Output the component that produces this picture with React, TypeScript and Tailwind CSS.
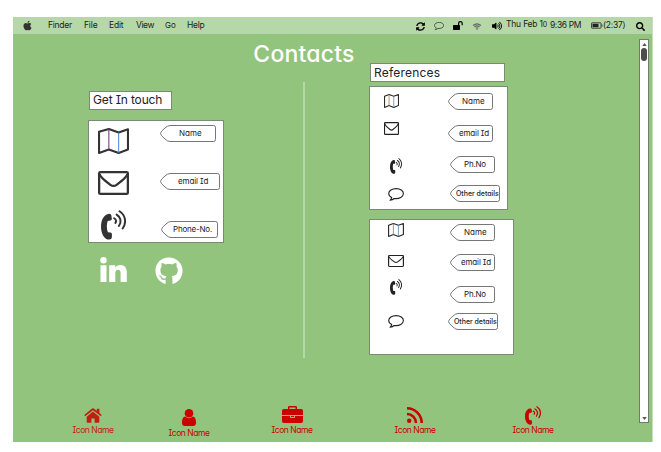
import type { ReactNode } from "react";
import { FaApple, FaGithub, FaSearch, FaSyncAlt, FaVolumeUp } from "react-icons/fa";

type IconProps = { className?: string };

function MapIcon({ className = "" }: IconProps) {
  return (
    <svg viewBox="0 0 30 26" preserveAspectRatio="none" className={className} fill="none" stroke="currentColor">
      <path d="M1 3.800 10.500 1 20 4.500 29 1.200v20.300L20 25l-9.500-3.500L1 25Z" strokeWidth="2" strokeLinejoin="round" />
      <path d="M10.500 1v20.500" strokeWidth="1" stroke="#74347a" />
      <path d="M20 4.500v20.500" strokeWidth="1" stroke="#4f8bd0" />
    </svg>
  );
}

function SmallMapIcon({ className = "" }: IconProps) {
  return (
    <svg viewBox="0 0 16 14" preserveAspectRatio="none" className={className} fill="none" stroke="currentColor">
      <path d="M.6 2.300 5.400.6l5 1.700L15.400.6v11L10.400 13.400l-5-1.800L.6 13.400Z" strokeWidth="1.100" strokeLinejoin="round" />
      <path d="M5.400.6v11" strokeWidth=".9" stroke="#a98565" />
      <path d="M10.400 2.300v11" strokeWidth=".9" stroke="#6d8fb4" />
    </svg>
  );
}

function MailIcon({ className = "" }: IconProps) {
  return (
    <svg viewBox="0 0 30 24" preserveAspectRatio="none" className={className} fill="none" stroke="currentColor" strokeWidth="2.200" strokeLinejoin="round">
      <rect x="1.100" y="1.100" width="27.800" height="21.800" rx="1.200" />
      <path d="M1.500 3C2 6 5 8.500 12 13.800q3 2.200 6 0C25 8.500 28 6 28.500 3" />
    </svg>
  );
}

function CommentIcon({ className = "" }: IconProps) {
  return (
    <svg viewBox="0 0 16 13" preserveAspectRatio="none" className={className} fill="none" stroke="currentColor" strokeWidth="1.100" strokeLinejoin="round">
      <path d="M8.200.6C4 .6.700 2.800.700 5.600c0 1.700 1.200 3.100 3 4-.2 1-.8 1.900-1.700 2.700 1.800-.2 3.200-.8 4.200-1.800 5.300.7 9.200-1.800 9.200-4.900C15.400 2.800 12.200.600 8.200.600Z" />
    </svg>
  );
}

/* Upright handset with three sound waves. */
function PhoneIcon({ className = "" }: IconProps) {
  return (
    <svg viewBox="0 0 24 30" preserveAspectRatio="none" className={className}>
      <path
        fill="currentColor"
        d="M7 3.900Q9.600 3.300 9.900 5.300L10.400 8.700Q10.500 10.300 9 10.600L6.400 11C5.300 14.500 5.300 18.500 6.600 22.300L9 22.400Q10.500 22.600 10.500 24.200L10.400 27.600Q10.300 29.500 8 29.600C3.500 29.800 0 24 0 16.700 0 9.800 2.600 4.800 7 3.900Z"
      />
      <g fill="none" stroke="currentColor" strokeWidth="1.900" strokeLinecap="round">
        <path d="M12.600 8.300q3 1.800 1.200 4.700" />
        <path d="M15 4.600c4 2.400 5 7 2.200 11.400" />
        <path d="M17.800 1.200c5.700 3.800 7 11.200 3 17.300" />
      </g>
    </svg>
  );
}

function LinkedinIcon({ className = "" }: IconProps) {
  return (
    <svg viewBox="0 0 27 26" className={className} fill="currentColor">
      <circle cx="3.500" cy="3.200" r="3.200" />
      <path d="M.5 8.300h6V25h-6ZM9.200 8.300h6v2.300c1-1.700 2.700-2.700 5.100-2.700 4.100 0 6.500 2.700 6.500 7.400V25h-6.200v-8.900c0-2.300-.8-3.400-2.400-3.400-1.800 0-2.900 1.200-2.900 3.500V25H9.200Z" />
    </svg>
  );
}

function HomeIcon({ className = "" }: IconProps) {
  return (
    <svg viewBox="0 0 18 15" className={className} fill="currentColor">
      <path d="M9 3.600 15.300 8.800v5.300q0 .7-.7.7h-4V10.400H7.400v4.400h-4q-.7 0-.7-.7V8.800Z" />
      <path d="M9 .200q.5 0 .9.300L12.800 3V1.100q0-.4.400-.4h1.800q.4 0 .4.400v4l2.300 2-.9 1.100L9 2.200 1.200 8.200l-.9-1.100L8.100.500Q8.500.200 9 .200Z" />
    </svg>
  );
}

function UserIcon({ className = "" }: IconProps) {
  return (
    <svg viewBox="0 0 14 17" className={className} fill="currentColor">
      <circle cx="7" cy="4.300" r="4.300" />
      <path d="M3.200 7.600C1 7.800 0 10.200 0 13.700 0 15.800 1.200 17 3 17h8c1.800 0 3-1.200 3-3.300 0-3.500-1-5.900-3.200-6.100A5.600 5.600 0 0 1 7 9.200a5.600 5.600 0 0 1-3.800-1.600Z" />
    </svg>
  );
}

function BriefcaseIcon({ className = "" }: IconProps) {
  return (
    <svg viewBox="0 0 21 17" className={className} fill="currentColor" fillRule="evenodd">
      <path d="M6 3V1.200Q6 0 7.200 0h6.600Q15 0 15 1.200V3h4.200Q21 3 21 4.800V9H0V4.800Q0 3 1.800 3ZM7.500 3h6V1.500h-6Z" />
      <path d="M0 10h8v1.300q0 .7.700.7h3.600q.7 0 .7-.7V10h8v5.200q0 1.800-1.800 1.800H1.800Q0 17 0 15.200Zm9 0h3v1H9Z" />
    </svg>
  );
}

function RssIcon({ className = "" }: IconProps) {
  return (
    <svg viewBox="0 0 16 16" className={className} fill="none" stroke="currentColor" strokeWidth="2.600">
      <circle cx="2.200" cy="13.800" r="2.200" fill="currentColor" stroke="none" />
      <path d="M0 7A9 9 0 0 1 9 16M0 1.300A14.700 14.700 0 0 1 14.700 16" />
    </svg>
  );
}

function LockIcon({ className = "" }: IconProps) {
  return (
    <svg viewBox="0 0 10 9" className={className} fill="currentColor">
      <path d="M.6 4H5V2.500a2.400 2.400 0 0 1 4.800 0v1.700H8.600V2.500a1.200 1.200 0 0 0-2.400 0V4q.8 0 .8.700v3.600q0 .7-.7.700H.7Q0 9 0 8.300V4.700Q0 4 .6 4Z" />
    </svg>
  );
}

function WifiIcon({ className = "" }: IconProps) {
  return (
    <svg viewBox="0 0 10 8" className={className} fill="none" stroke="currentColor" strokeWidth="1.300">
      <path d="M.5 2.800Q5-1 9.500 2.800M2 4.500q3-2.500 6 0M3.500 6q1.500-1.200 3 0" />
      <circle cx="5" cy="7" r=".8" fill="currentColor" stroke="none" />
    </svg>
  );
}

function BatteryIcon({ className = "" }: IconProps) {
  return (
    <svg viewBox="0 0 12 7" className={className} fill="none" stroke="currentColor">
      <rect x=".5" y=".8" width="9.500" height="5.400" rx=".5" strokeWidth=".8" />
      <path d="M1.500 1.800H7.500v3.400h-6Z" fill="currentColor" stroke="none" />
      <path d="M11 2.500v2" strokeWidth=".8" />
    </svg>
  );
}

/* Label with a pointed left edge. */
function Tag({ width, className, text, children }: { width: number; className: string; text: string; children: ReactNode }) {
  const right = width - 0.5;
  return (
    <div className={`relative flex h-[17px] shrink-0 items-center whitespace-nowrap text-[#222] ${className}`}>
      <svg viewBox={`0 0 ${width} 17`} className="absolute inset-0 h-full w-full" fill="none" stroke="#666" strokeWidth="0.9">
        <path d={`M10 .5H${right - 2}q2 0 2 2v12q0 2-2 2H10Q7.500 16.500 5 14 .5 10.300.5 8.500T5 3Q7.500.5 10 .5Z`} />
      </svg>
      <span className={`relative ${text}`}>{children}</span>
    </div>
  );
}

function NavItem({ className, label, children }: { className: string; label: string; children: ReactNode }) {
  return (
    <div className={`flex w-[60px] shrink-0 flex-col items-center text-[#cc0000] ${className}`}>
      {children}
      <span className="whitespace-nowrap text-[8.5px] leading-[10px] tracking-[-0.45px]">{label}</span>
    </div>
  );
}

function MenuBar() {
  return (
    <header className="flex h-[17px] items-center bg-[#b6d7a8] text-[8.5px] leading-[16px] whitespace-nowrap text-[#222]">
      <FaApple className="ml-[9px] h-[11px] w-[11px] shrink-0 text-[#333]" />
      <span className="-mt-[2px] ml-[15px] w-[36px] tracking-[-0.25px]">Finder</span>
      <span className="-mt-[2px] w-[25px] tracking-[-0.15px]">File</span>
      <span className="-mt-[2px] w-[27px] tracking-[-0.2px]">Edit</span>
      <span className="-mt-[2px] w-[29px] tracking-[-0.4px]">View</span>
      <span className="-mt-[2px] w-[22px] text-[8px]">Go</span>
      <span className="-mt-[2px] w-[20px] tracking-[-0.3px]">Help</span>
      <FaSyncAlt className="mt-[2px] ml-[209px] size-[9px] shrink-0 text-black" />
      <CommentIcon className="mt-[1px] ml-[9px] h-[8px] w-[10px] shrink-0" />
      <LockIcon className="ml-[9px] h-[9px] w-[10px] shrink-0 text-black" />
      <WifiIcon className="mt-[1px] ml-[9px] h-[7px] w-[10px] shrink-0 text-[#666]" />
      <FaVolumeUp className="ml-[10px] size-[10px] shrink-0 text-black" />
      <span className="-mt-[2px] ml-[4px] w-[44px] tracking-[-0.2px]">Thu Feb 1<span className="text-[7px]">0</span></span>
      <span className="-mt-[2px] w-[41px] tracking-[-0.4px]">9:36 PM</span>
      <BatteryIcon className="h-[7px] w-[12px] shrink-0" />
      <span className="-mt-[2px] w-[33px] tracking-[-0.25px]">(2:37)</span>
      <FaSearch className="mt-[1px] size-[9px] shrink-0 text-black" />
    </header>
  );
}

function GetInTouch() {
  return (
    <section className="w-[240px] shrink-0 pt-[57px]">
      <h2 className="ml-[76px] flex h-[19px] w-[83px] items-center border border-[#7b8a73] bg-white pb-[2px] pl-[3px] text-[12px] tracking-[-0.15px] whitespace-nowrap text-[#222]">
        Get In touch
      </h2>
      <div className="mt-[10px] ml-[75px] flex h-[123px] w-[136px] border border-[#7b8a73] bg-white text-[#333]">
        <div className="ml-[9px] flex w-[62px] shrink-0 flex-col">
          <MapIcon className="mt-[7px] h-[26px] w-[31px]" />
          <MailIcon className="mt-[17px] h-[24px] w-[31px]" />
          <PhoneIcon className="mt-[15px] ml-[3px] h-[30px] w-[25px]" />
        </div>
        <div className="flex flex-col">
          <Tag width={56} className="mt-[4px] w-[56px] pb-[2px] pl-[19px]" text="text-[8px]">Name</Tag>
          <Tag width={60} className="mt-[31px] w-[60px] pb-[1px] pl-[18px]" text="text-[8px] tracking-[-0.1px]">email Id</Tag>
          <Tag width={57} className="mt-[31px] ml-[1px] w-[57px] pb-[2px] pl-[12px]" text="text-[8px] tracking-[-0.2px]">Phone-No.</Tag>
        </div>
      </div>
      <div className="mt-[14px] ml-[87px] flex items-start text-white">
        <LinkedinIcon className="h-[26px] w-[27px]" />
        <FaGithub className="ml-[28px] size-[28px]" />
      </div>
    </section>
  );
}

function References() {
  return (
    <section className="w-[284px] shrink-0 pt-[29px] pl-[14px] text-[#222]">
      <h2 className="ml-[1px] flex h-[19px] w-[135px] items-center border border-[#7b8a73] bg-white pl-[3px] text-[12px] tracking-[0.2px]">
        References
      </h2>
      <div className="mt-[4px] flex h-[124px] w-[139px] border border-[#7b8a73] bg-white">
        <div className="flex w-[78px] shrink-0 flex-col pl-[14px]">
          <SmallMapIcon className="mt-[7px] h-[14px] w-[15px]" />
          <MailIcon className="mt-[14px] h-[13px] w-[15px]" />
          <PhoneIcon className="mt-[23px] ml-[6px] h-[16px] w-[12px]" />
          <CommentIcon className="mt-[14px] ml-[4px] h-[13px] w-[16px]" />
        </div>
        <div className="flex flex-col">
          <Tag width={45} className="mt-[6px] w-[45px] pb-[1px] pl-[14px]" text="text-[8px]">Name</Tag>
          <Tag width={45} className="mt-[15px] w-[45px] pb-[1px] pl-[11px]" text="text-[8px] tracking-[-0.15px]">email Id</Tag>
          <Tag width={45} className="mt-[14px] ml-[2px] w-[45px] pb-[2px] pl-[14px]" text="text-[8px] tracking-[-0.2px]">Ph.No</Tag>
          <Tag width={50} className="mt-[12px] ml-[2px] w-[50px] pt-[2px] pl-[6px]" text="text-[7px] font-medium tracking-[-0.02px]">Other details</Tag>
        </div>
      </div>
      <div className="mt-[9px] flex h-[136px] w-[145px] border border-[#7b8a73] bg-white">
        <div className="flex w-[78px] shrink-0 flex-col pl-[18px]">
          <SmallMapIcon className="mt-[3px] h-[14px] w-[16px]" />
          <MailIcon className="mt-[18px] h-[12px] w-[16px]" />
          <PhoneIcon className="mt-[12px] ml-[2px] h-[16px] w-[12px]" />
          <CommentIcon className="mt-[20px] h-[13px] w-[16px]" />
        </div>
        <div className="flex flex-col">
          <Tag width={45} className="mt-[4px] ml-[2px] w-[45px] pb-[1px] pl-[14px]" text="text-[8px]">Name</Tag>
          <Tag width={45} className="mt-[13px] ml-[2px] w-[45px] pb-[2px] pl-[11px]" text="text-[8px] tracking-[-0.15px]">email Id</Tag>
          <Tag width={45} className="mt-[15px] ml-[2px] w-[45px] pb-[1px] pl-[14px]" text="text-[8px] tracking-[-0.2px]">Ph.No</Tag>
          <Tag width={50} className="mt-[10px] w-[50px] pt-[2px] pl-[6px]" text="text-[7px] font-medium tracking-[-0.02px]">Other details</Tag>
        </div>
      </div>
    </section>
  );
}

function Scrollbar() {
  return (
    <div className="mt-[5px] flex h-[384px] w-[10px] shrink-0 flex-col items-center border border-[#6f7d68] bg-white text-[#555]">
      <svg viewBox="0 0 6 4" className="mt-[3px] h-[3px] w-[5px]" fill="currentColor"><path d="M3 0 6 4H0Z" /></svg>
      <div className="mt-[2px] h-[13px] w-[6px] rounded-full bg-[#4d4d4d]" />
      <svg viewBox="0 0 6 4" className="mt-auto mb-[2px] h-[3px] w-[5px]" fill="currentColor"><path d="M0 0h6L3 4Z" /></svg>
    </div>
  );
}

export default function App() {
  return (
    <div className="h-[452px] w-[661px] overflow-hidden bg-white pt-[17px] pl-[13px] font-['Inter','Liberation_Sans',sans-serif] [font-feature-settings:'cv08','cv11']">
      <div className="h-[425px] w-[640px] border-r border-[#c5dfba] bg-[#93c47d]">
        <MenuBar />
        <div className="flex">
          <main className="w-[626px] shrink-0">
            <div className="flex h-[368px]">
              <GetInTouch />
              <div className="flex w-[102px] shrink-0 flex-col items-center">
                <h1 className="mt-[5px] text-[23px] leading-[30px] font-medium tracking-[0.2px] whitespace-nowrap text-white">Contacts</h1>
                <div className="mt-[13px] h-[276px] w-[2px] bg-[#b6d7a8]" />
              </div>
              <References />
            </div>
            <nav className="flex items-start pl-[50px]">
              <NavItem label="Icon Name" className="pt-[6px] opacity-85">
                <HomeIcon className="mb-[2px] h-[15px] w-[18px]" />
              </NavItem>
              <NavItem label="Icon Name" className="ml-[36px] pt-[7px]">
                <UserIcon className="mb-[2px] h-[17px] w-[14px]" />
              </NavItem>
              <NavItem label="Icon Name" className="ml-[43px] pt-[4px]">
                <BriefcaseIcon className="mb-[2px] h-[17px] w-[21px]" />
              </NavItem>
              <NavItem label="Icon Name" className="ml-[63px] pt-[5px]">
                <RssIcon className="mb-[2px] size-[16px]" />
              </NavItem>
              <NavItem label="Icon Name" className="ml-[58px] pt-[4px]">
                <PhoneIcon className="mb-0 h-[19px] w-[16px]" />
              </NavItem>
            </nav>
          </main>
          <Scrollbar />
        </div>
      </div>
    </div>
  );
}
